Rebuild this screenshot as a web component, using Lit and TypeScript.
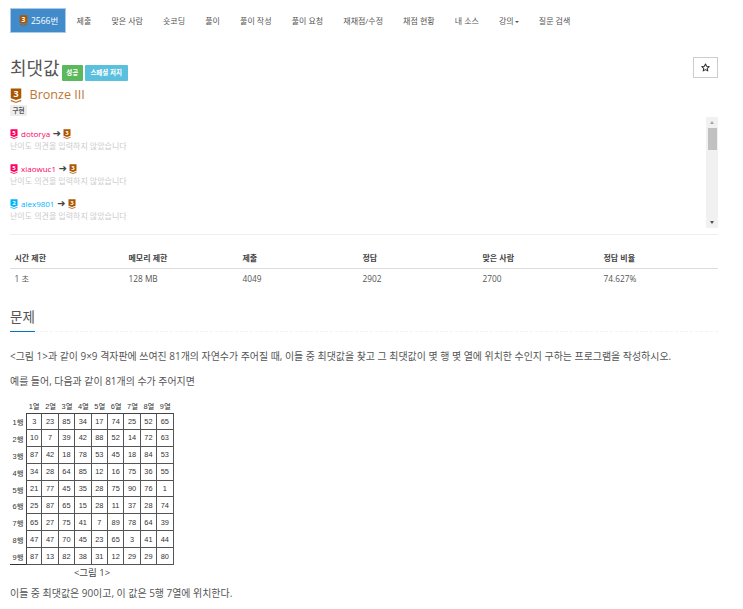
import { LitElement, html, css, svg } from "lit";
import { customElement } from "lit/decorators.js";

const tier = (n: string, color: string, size = 9) => html`<svg class="tier" width=${size} height=${Math.round(size * 1.25)} viewBox="0 0 16 20" aria-hidden="true">
  <path d="M1 0.5H15V13.5L8 16L1 13.5Z" fill=${color}></path>
  <path d="M1 15.5L8 18.2L15 15.5V17.5L8 20L1 17.5Z" fill=${color} opacity=".8"></path>
  ${svg`<text x="8" y="12" text-anchor="middle" font-size="12" font-weight="700" fill="#fff" font-family="Open Sans, sans-serif">${n}</text>`}
</svg>`;

const NAV = ["제출", "맞은 사람", "숏코딩", "풀이", "풀이 작성", "풀이 요청", "재채점/수정", "채점 현황", "내 소스"];
const BR = "#ad5600", PK = "#ff0062", BL = "#00b4fc";
const OPS: [string, string, string][] = [
  ["5", PK, "dotorya"],
  ["5", PK, "xiaowuc1"],
  ["2", BL, "alex9801"],
];
const COLS = ["1열", "2열", "3열", "4열", "5열", "6열", "7열", "8열", "9열"];
const ROWS = [
  [3, 23, 85, 34, 17, 74, 25, 52, 65],
  [10, 7, 39, 42, 88, 52, 14, 72, 63],
  [87, 42, 18, 78, 53, 45, 18, 84, 53],
  [34, 28, 64, 85, 12, 16, 75, 36, 55],
  [21, 77, 45, 35, 28, 75, 90, 76, 1],
  [25, 87, 65, 15, 28, 11, 37, 28, 74],
  [65, 27, 75, 41, 7, 89, 78, 64, 39],
  [47, 47, 70, 45, 23, 65, 3, 41, 44],
  [87, 13, 82, 38, 31, 12, 29, 29, 80],
];
const STATS = [
  ["시간 제한", "1 초"],
  ["메모리 제한", "128 MB"],
  ["제출", "4049"],
  ["정답", "2902"],
  ["맞은 사람", "2700"],
  ["정답 비율", "74.627%"],
];

@customElement("app-root")
export class AppRoot extends LitElement {
  static styles = css`
    :host {
      display: block;
      width: 743px;
      height: 609px;
      overflow: hidden;
      background: #fff;
      color: #555;
      font-family: "Open Sans", "Noto Sans CJK KR", sans-serif;
      font-size: 8px;
      box-sizing: border-box;
      padding: 8px 25px 0 10px;
    }
    .nav { display: flex; align-items: center; height: 25px; gap: 0; }
    .nav a { padding: 0 10.05px; color: #555; white-space: nowrap; line-height: 25px; }
    .nav a.active {
      display: flex; align-items: center; gap: 3px; box-sizing: border-box;
      width: 56px; height: 25px; margin-right: 0.5px; padding: 0 0 0 8px;
      background: #428bca; color: #fff; border: 1px solid #a9cbe8; font-size: 8.5px;
    }
    .caret { display: inline-block; margin-left: 1px; vertical-align: middle; border-top: 2.5px solid #555; border-left: 2.5px solid transparent; border-right: 2.5px solid transparent; }
    .title-row { display: flex; align-items: flex-start; margin-top: 24px; height: 30px; }
    h1 { margin: -2px 0 0; font-weight: 400; font-size: 18px; line-height: 26px; color: #555; }
    .label { display: inline-block; margin-top: 7.5px; height: 16px; line-height: 16px; color: #fff; font-size: 6.5px; font-weight: 700; border-radius: 1px; white-space: nowrap; text-align: center; box-sizing: border-box; }
    .green { background: #5cb85c; margin-left: 2px; width: 21px; }
    .cyan { background: #5bc0de; margin-left: 2px; width: 43px; }
    .star { margin-left: auto; width: 25px; height: 21px; box-sizing: border-box; border: 1px solid #ccc; display: flex; align-items: center; justify-content: center; }
    .tier-row { display: flex; align-items: center; gap: 7.5px; height: 16px; font-size: 12.6px; color: #ad5600; line-height: 16px; font-weight: 400; }
    .tier-row span { opacity: .8; }
    .tier-row .tier { margin-top: 1px; }
    .algo { display: inline-block; margin-top: 2px; background: #eee; color: #555; font-size: 6.5px; font-weight: 700; line-height: 11px; height: 11px; padding: 0 2.5px; border-radius: 1px; vertical-align: top; }
    .opinions { display: flex; height: 111px; margin-top: 1px; border-bottom: 1px solid #eee; padding-bottom: 6px; }
    .op-list { flex: 1; padding-top: 11px; }
    .op { height: 35px; }
    .op .who { display: flex; align-items: center; height: 12px; font-size: 8px; gap: 2.5px; line-height: 12px; }
    .op .who .name { margin-left: 0.5px; }
    .op .who .arrow { color: #444; font-size: 10px; font-family: "DejaVu Sans", sans-serif; }
    .op .none { color: #ccc; font-size: 8px; line-height: 12px; }
    .sb { width: 12px; background: #f1f1f1; display: flex; flex-direction: column; align-items: center; justify-content: space-between; position: relative; padding: 4px 0; box-sizing: border-box; }
    .sb .thumb { position: absolute; top: 11px; left: 1.5px; width: 9px; height: 22px; background: #c1c1c1; }
    .sb i { width: 0; height: 0; border-left: 2.5px solid transparent; border-right: 2.5px solid transparent; }
    .sb .up { border-bottom: 3px solid #a3a3a3; }
    .sb .down { border-top: 3px solid #505050; }
    .stats { display: grid; grid-template-columns: 114px 114px 120px 120px 121px 119px; margin-top: 11px; }
    .stats div { padding-left: 4.5px; white-space: nowrap; }
    .stats .h { font-weight: 700; color: #444; border-bottom: 1px solid #ddd; height: 22px; line-height: 23px; }
    .stats .v { height: 20px; line-height: 20px; font-size: 8.3px; }
    .sec { display: flex; margin-top: 18px; height: 24px; border-bottom: 1px dashed #f2f2f2; }
    .sec h2 { margin: 0; font-weight: 400; font-size: 13.5px; line-height: 21px; height: 24px; border-bottom: 1px solid #0076c0; color: #555; width: 25px; }
    p { margin: 0; font-size: 9.95px; line-height: 13px; color: #555; white-space: nowrap; }
    .p1 { margin-top: 18px; }
    .p2 { margin-top: 12px; }
    .fig { margin-top: 9px; width: 164px; display: grid; grid-template-columns: 16px repeat(9, 16.4px); grid-template-rows: 15px repeat(9, 16.9px); padding-top: 1px; font-family: "Liberation Sans", "Noto Sans CJK KR", sans-serif; font-size: 7.4px; color: #333; }
    .fig span { display: flex; align-items: center; justify-content: center; box-sizing: border-box; }
    .fig .c { border-right: 1px solid #555; border-bottom: 1px solid #555; }
    .fig .c.t { border-top: 1px solid #444; }
    .fig .c.l { border-left: 1px solid #444; }
    .fig .rh.last { border-bottom: 1px solid #333; }
    .cap { width: 164px; text-align: center; font-size: 9.5px; line-height: 12px; margin-top: 2px; color: #444; }
    .p3 { margin-top: 8px; }
  `;

  render() {
    return html`
      <div class="nav">
        <a class="active">${tier("3", BR, 9)}<span>2566번</span></a>
        ${NAV.map((n) => html`<a>${n}</a>`)}
        <a>강의<span class="caret"></span></a>
        <a>질문 검색</a>
      </div>
      <div class="title-row">
        <h1>최댓값</h1>
        <span class="label green">성공</span>
        <span class="label cyan">스페셜 저지</span>
        <span class="star"><svg width="9" height="9" viewBox="0 0 24 24" aria-hidden="true"><path d="M12 2.5l2.9 6.3 6.9.8-5.1 4.7 1.4 6.8-6.1-3.4-6.1 3.4 1.4-6.8L2.2 9.6l6.9-.8z" fill="none" stroke="#333" stroke-width="2.8" stroke-linejoin="round"></path></svg></span>
      </div>
      <div class="tier-row">${tier("3", BR, 12)}<span>Bronze III</span></div>
      <div><span class="algo">구현</span></div>
      <div class="opinions">
        <div class="op-list">
          ${OPS.map(([n, c, name]) => html`<div class="op">
            <div class="who" style="color:${c}">${tier(n, c, 8)}<span class="name">${name}</span><span class="arrow">➜</span>${tier("3", BR, 8)}</div>
            <div class="none">난이도 의견을 입력하지 않았습니다</div>
          </div>`)}
        </div>
        <div class="sb"><i class="up"></i><span class="thumb"></span><i class="down"></i></div>
      </div>
      <div class="stats">
        ${STATS.map((s) => html`<div class="h">${s[0]}</div>`)}
        ${STATS.map((s) => html`<div class="v">${s[1]}</div>`)}
      </div>
      <div class="sec"><h2>문제</h2></div>
      <p class="p1">&lt;그림 1&gt;과 같이 9×9 격자판에 쓰여진 81개의 자연수가 주어질 때, 이들 중 최댓값을 찾고 그 최댓값이 몇 행 몇 열에 위치한 수인지 구하는 프로그램을 작성하시오.</p>
      <p class="p2">예를 들어, 다음과 같이 81개의 수가 주어지면</p>
      <div class="fig">
        <span></span>${COLS.map((c) => html`<span>${c}</span>`)}
        ${ROWS.map((r, i) => html`<span class="rh ${i === 8 ? "last" : ""}">${i + 1}행</span>${r.map(
          (v, j) => html`<span class="c ${i === 0 ? "t" : ""} ${j === 0 ? "l" : ""}">${v}</span>`
        )}`)}
      </div>
      <div class="cap">&lt;그림 1&gt;</div>
      <p class="p3">이들 중 최댓값은 90이고, 이 값은 5행 7열에 위치한다.</p>
    `;
  }
}
